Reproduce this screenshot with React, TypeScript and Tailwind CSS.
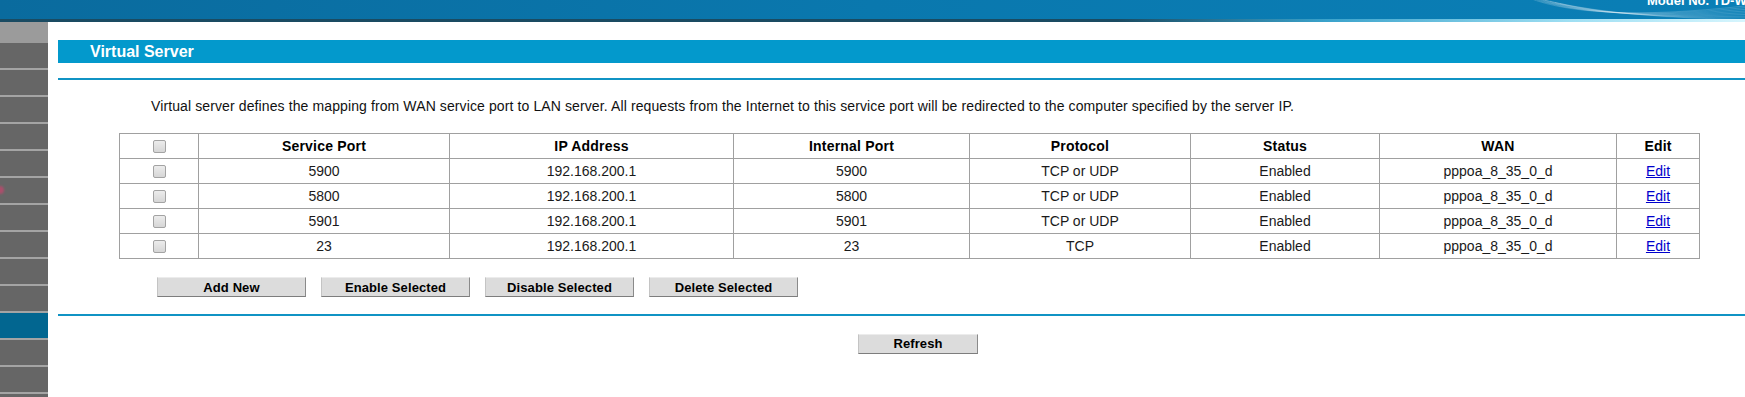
import React from "react";

const rows = [
  { port: "5900", ip: "192.168.200.1", internal: "5900", proto: "TCP or UDP" },
  { port: "5800", ip: "192.168.200.1", internal: "5800", proto: "TCP or UDP" },
  { port: "5901", ip: "192.168.200.1", internal: "5901", proto: "TCP or UDP" },
  { port: "23", ip: "192.168.200.1", internal: "23", proto: "TCP" },
];

function Box() {
  return (
    <span className="inline-block w-[13px] h-[13px] rounded-[2px] border border-[#a3a3a3] bg-gradient-to-b from-[#ececec] to-[#d6d6d6] align-middle" />
  );
}

function Btn({ label, w }: { label: string; w: string }) {
  return (
    <button
      className={`${w} h-[20px] bg-[#dcdcdc] border-t border-l border-t-[#ececec] border-l-[#c4c4c4] border-b border-r border-b-[#7d7d7d] border-r-[#8a8a8a] text-[13px] font-bold text-black leading-none tracking-[0.1px]`}
    >
      {label}
    </button>
  );
}

export default function App() {
  const sep = "h-[2px] bg-[#a4a4a4]";
  const item = "h-[25px] bg-[#666666]";
  const cell = "border border-[#a0a0a0] p-0";
  return (
    <div className="w-[1745px] h-[397px] overflow-hidden bg-white font-['Liberation_Sans',Arial,sans-serif] text-black">
      {/* header */}
      <div className="relative h-[22px]">
        <div className="h-[19px] bg-gradient-to-r from-[#0a6b9e] via-[#0a78ae] to-[#0a7fb6]" />
        <div className="h-[3px] bg-[linear-gradient(to_right,#1a4b62_0%,#1a4b62_64%,#3aa2cb_76%,#9fdff3_90%,#d6f5fd_100%)]" />
        <svg className="absolute left-[1500px] top-0" width="245" height="22" viewBox="0 0 245 22">
          {[0, 1, 2, 3, 4, 5, 6, 7, 8].map((i) => (
            <path
              key={i}
              d={`M${20 + i * 5} ${-6 + i * 1.2} Q ${80 + i * 6} ${24 - i * 0.8} ${245} ${6 + i * 1.7}`}
              stroke="#ffffff"
              strokeOpacity={0.22}
              strokeWidth={0.8}
              fill="none"
            />
          ))}
        </svg>
        <div className="absolute left-[1647px] top-[-6px] text-[13px] font-bold text-white whitespace-nowrap leading-[14px]">
          Model No. TD-W8968
        </div>
      </div>

      <div className="flex">
        {/* sidebar */}
        <div className="w-[48px] flex flex-col shrink-0">
          <div className="h-[21px] bg-[#9b9b9b]" />
          <div className={item} />
          <div className={sep} />
          <div className={item} />
          <div className={sep} />
          <div className={item} />
          <div className={sep} />
          <div className={item} />
          <div className={sep} />
          <div className={item} />
          <div className={sep} />
          <div className={`${item} relative`}>
            <span className="absolute left-[-4px] top-[8px] w-[8px] h-[8px] rounded-full bg-[#c9456e] opacity-70 blur-[1px]" />
          </div>
          <div className={sep} />
          <div className={item} />
          <div className={sep} />
          <div className={item} />
          <div className={sep} />
          <div className={item} />
          <div className={sep} />
          <div className={item} />
          <div className={sep} />
          <div className="h-[25px] bg-[#026690]" />
          <div className={sep} />
          <div className={item} />
          <div className={sep} />
          <div className={item} />
          <div className={sep} />
          <div className={item} />
        </div>

        {/* main */}
        <div className="flex-1 pl-[10px] pt-[18px]">
          <div className="h-[23px] bg-[#0399cc] pl-[32px] flex items-center text-white font-bold text-[16px]">
            Virtual Server
          </div>
          <div className="mt-[15px] h-[2px] bg-[#1093c4]" />
          <p className="mt-[18px] pl-[93px] text-[14px] leading-[16px] text-[#111] tracking-[0.11px] whitespace-nowrap">
            Virtual server defines the mapping from WAN service port to LAN server. All requests from the Internet to this service port will be redirected to the computer specified by the server IP.
          </p>
          <div className="mt-[19px] pl-[61px]">
            <table className="table-fixed border-collapse w-[1580px] text-[14px] text-center">
              <colgroup>
                <col className="w-[79px]" />
                <col className="w-[251px]" />
                <col className="w-[284px]" />
                <col className="w-[236px]" />
                <col className="w-[221px]" />
                <col className="w-[189px]" />
                <col className="w-[237px]" />
                <col className="w-[83px]" />
              </colgroup>
              <thead>
                <tr className="font-bold tracking-[0.2px]">
                  <td className={`h-[25px] ${cell}`}><Box /></td>
                  <td className={cell}>Service Port</td>
                  <td className={cell}>IP Address</td>
                  <td className={cell}>Internal Port</td>
                  <td className={cell}>Protocol</td>
                  <td className={cell}>Status</td>
                  <td className={cell}>WAN</td>
                  <td className={cell}>Edit</td>
                </tr>
              </thead>
              <tbody>
                {rows.map((r) => (
                  <tr key={r.port} className="text-[#1a1a1a]">
                    <td className={`h-[25px] ${cell}`}><Box /></td>
                    <td className={cell}>{r.port}</td>
                    <td className={cell}>{r.ip}</td>
                    <td className={cell}>{r.internal}</td>
                    <td className={cell}>{r.proto}</td>
                    <td className={cell}>Enabled</td>
                    <td className={cell}>pppoa_8_35_0_d</td>
                    <td className={cell}>
                      <a className="text-[#0000cc] underline" href="#">Edit</a>
                    </td>
                  </tr>
                ))}
              </tbody>
            </table>
          </div>
          <div className="mt-[18px] pl-[99px] flex gap-[15px]">
            <Btn label="Add New" w="w-[149px]" />
            <Btn label="Enable Selected" w="w-[149px]" />
            <Btn label="Disable Selected" w="w-[149px]" />
            <Btn label="Delete Selected" w="w-[149px]" />
          </div>
          <div className="mt-[17px] h-[2px] bg-[#1093c4]" />
          <div className="mt-[15px] pl-[800px]">
            <Btn label="Refresh" w="w-[120px]" />
          </div>
        </div>
      </div>
    </div>
  );
}
